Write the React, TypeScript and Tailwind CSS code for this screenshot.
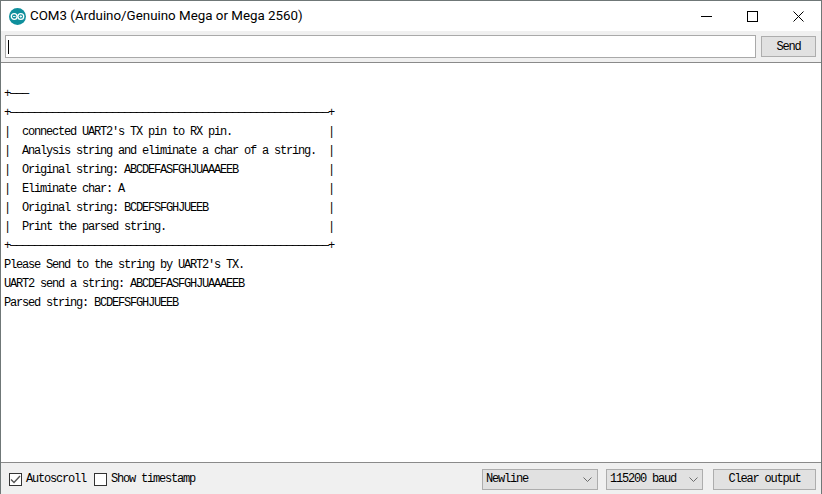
const RULE = "+" + "─".repeat(53) + "+";

const BOX_LINES = [
  "connected UART2's TX pin to RX pin.",
  "Analysis string and eliminate a char of a string.",
  "Original string: ABCDEFASFGHJUAAAEEB",
  "Eliminate char: A",
  "Original string: BCDEFSFGHJUEEB",
  "Print the parsed string.",
];

const OUTPUT = [
  "",
  "+───",
  RULE,
  ...BOX_LINES.map((line) => ("|  " + line).padEnd(54) + "|"),
  RULE,
  "Please Send to the string by UART2's TX.",
  "UART2 send a string: ABCDEFASFGHJUAAAEEB",
  "Parsed string: BCDEFSFGHJUEEB",
];

const MONO = "font-['Liberation_Mono',monospace] text-[12px] tracking-[-1.2px]";

function ArduinoLogo() {
  return (
    <svg width="17" height="17" viewBox="0 0 17 17" className="shrink-0">
      <circle cx="8.5" cy="8.5" r="8.5" fill="#0f8f9c" />
      <circle cx="5.2" cy="8.5" r="2.9" fill="none" stroke="#fff" strokeWidth="1.3" />
      <circle cx="11.8" cy="8.5" r="2.9" fill="none" stroke="#fff" strokeWidth="1.3" />
      <path d="M3.9 8.5h2.6M10.5 8.5h2.6M11.8 7.2v2.6" stroke="#fff" strokeWidth="0.9" />
    </svg>
  );
}

function Chevron() {
  return (
    <svg width="9" height="5" viewBox="0 0 9 5" className="shrink-0">
      <path d="M0.5 0.5L4.5 4.5L8.5 0.5" fill="none" stroke="#6b6b6b" strokeWidth="1" />
    </svg>
  );
}

function Checkbox({ checked, label }: { checked?: boolean; label: string }) {
  return (
    <div className="flex items-center gap-[4px]">
      <div className="w-[13px] h-[13px] border border-[#333] bg-white flex items-center justify-center">
        {checked && (
          <svg width="11" height="9" viewBox="0 0 11 9">
            <path d="M1 4.5L4 7.5L10 1" fill="none" stroke="#555" strokeWidth="1.4" />
          </svg>
        )}
      </div>
      <span className={MONO}>{label}</span>
    </div>
  );
}

function Select({ label, className }: { label: string; className: string }) {
  return (
    <div className={`h-[21px] bg-[#e1e1e1] border border-[#adadad] flex items-center justify-between pl-[3px] ${className}`}>
      <span className={MONO}>{label}</span>
      <Chevron />
    </div>
  );
}

export default function App() {
  return (
    <div className="w-[822px] h-[494px] flex flex-col overflow-hidden bg-white border-t border-l border-r border-[#6f7777] text-black">
      {/* Title bar */}
      <div className="h-[30px] shrink-0 flex items-center pl-2">
        <ArduinoLogo />
        <span className="ml-[4px] font-['Roboto',sans-serif] text-[13.35px] leading-none whitespace-pre">
          COM3 (Arduino/Genuino Mega or Mega 2560)
        </span>
        <div className="ml-auto flex items-center pr-[17px] gap-[35px]">
          <div className="w-[11px] h-px bg-black" />
          <div className="w-[11px] h-[11px] border border-black" />
          <svg width="11" height="11" viewBox="0 0 11 11">
            <path d="M0.5 0.5L10.5 10.5M10.5 0.5L0.5 10.5" stroke="#000" strokeWidth="1" />
          </svg>
        </div>
      </div>

      {/* Send bar */}
      <div className="h-[32px] shrink-0 bg-[#f0f0f0] border-b border-[#8a8a8a] flex items-start pl-1 pt-[4px]">
        <div className="w-[751px] h-[23px] bg-white border border-[#a9a9a9] flex items-center pl-[2px]">
          <div className="w-px h-[14px] bg-black" />
        </div>
        <div className={`ml-[5px] mt-px w-[55px] h-[21px] bg-[#e1e1e1] border border-[#adadad] flex items-center justify-center ${MONO}`}>
          Send
        </div>
      </div>

      {/* Console output */}
      <div className={`flex-1 min-h-0 pl-[3px] pt-[3px] ${MONO}`}>
        {OUTPUT.map((line, i) => (
          <div key={i} className="h-[19px] leading-[19px] whitespace-pre">
            {line}
          </div>
        ))}
      </div>

      {/* Footer */}
      <div className="h-[32px] shrink-0 bg-[#f0f0f0] border-t border-[#8a8a8a] flex items-center pl-2 pr-[5px] pt-px">
        <div className="flex items-center gap-[8px]">
          <Checkbox checked label="Autoscroll" />
          <Checkbox label="Show timestamp" />
        </div>
        <div className="ml-auto flex items-center">
          <Select label="Newline" className="w-[116px] pr-[5px]" />
          <Select label="115200 baud" className="w-[97px] ml-[8px] pr-[4px]" />
          <div className={`ml-[10px] w-[103px] h-[21px] bg-[#e1e1e1] border border-[#adadad] flex items-center justify-center ${MONO}`}>
            Clear output
          </div>
        </div>
      </div>
    </div>
  );
}
